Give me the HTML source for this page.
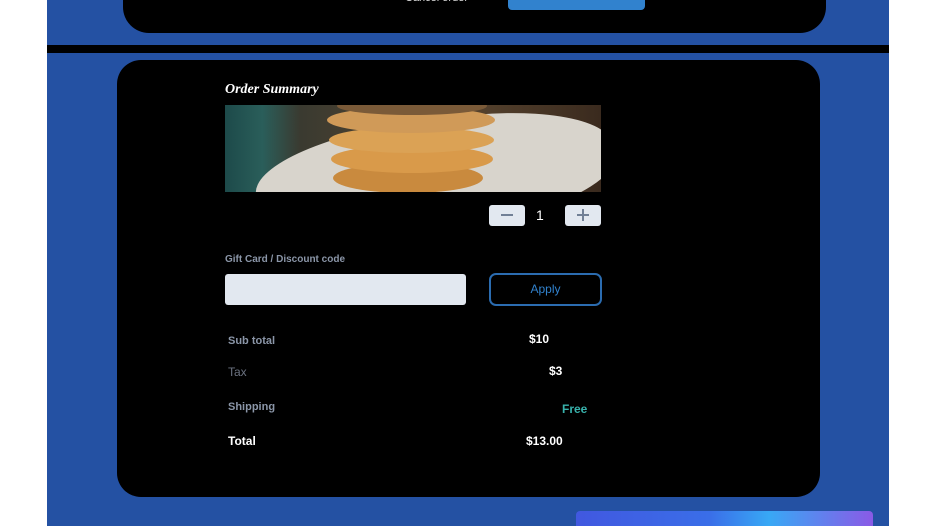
<!DOCTYPE html>
<html><head><style>
html,body{margin:0;width:936px;height:526px;overflow:hidden}
body{background:#fff;position:relative;font-family:"Liberation Sans",sans-serif}
.page{position:absolute;left:47px;top:0;width:842px;height:526px;background:#2451a3}
.bar{position:absolute;left:47px;top:45px;width:842px;height:8px;background:#000}
.c1{position:absolute;left:123px;top:-40px;width:703px;height:73px;background:#000;border-radius:0 0 26px 26px}
.c2{position:absolute;left:117px;top:60px;width:703px;height:437px;background:#000;border-radius:24px}
.abs{position:absolute}
.g{position:absolute;left:576px;top:511px;width:297px;height:15px;border-radius:4px 4px 0 0;background:linear-gradient(90deg,#4158e0 0%,#3a6ee8 45%,#38a8f5 65%,#8a5ae6 100%)}
.lbl{color:#8b96a8;font-weight:bold;font-size:11px}
</style></head><body>
<div class="page"></div>
<div class="bar"></div>
<div class="c1"></div>
<div class="abs" style="left:405px;top:-8px;color:#ddd;font-size:11px">Cancel order</div>
<div class="abs" style="left:508px;top:-10px;width:137px;height:20px;background:#3182ce;border-radius:4px"></div>
<div class="c2"></div>
<div class="abs" style="left:225px;top:82px;color:#fff;font-family:'Liberation Serif',serif;font-style:italic;font-weight:bold;font-size:14px">Order Summary</div>
<div class="abs" style="left:225px;top:105px;width:376px;height:87px;overflow:hidden;background:linear-gradient(90deg,#1d4a4a 0%,#2a5e5a 10%,#3a3a30 20%,#5a4630 60%,#3a2a1e 100%)">
 <div class="abs" style="left:30px;top:15px;width:360px;height:110px;background:#d8d4cc;border-radius:45%;transform:rotate(-8deg)"></div>
 <div class="abs" style="left:108px;top:58px;width:150px;height:30px;background:#c98a3e;border-radius:50%"></div>
 <div class="abs" style="left:106px;top:40px;width:162px;height:28px;background:#d99a4a;border-radius:50%"></div>
 <div class="abs" style="left:104px;top:22px;width:165px;height:26px;background:#dba255;border-radius:50%"></div>
 <div class="abs" style="left:102px;top:2px;width:168px;height:26px;background:#d09a58;border-radius:50%"></div>
 <div class="abs" style="left:112px;top:-8px;width:150px;height:18px;background:#7a5a38;border-radius:50%"></div>
</div>
<div class="abs" style="left:489px;top:205px;width:36px;height:21px;background:#e2e8f0;border-radius:3px"></div>
<div class="abs" style="left:501px;top:214px;width:12px;height:2px;background:#718096"></div>
<div class="abs" style="left:536px;top:207px;color:#fff;font-size:14px">1</div>
<div class="abs" style="left:565px;top:205px;width:36px;height:21px;background:#e2e8f0;border-radius:3px"></div>
<div class="abs" style="left:577px;top:214px;width:12px;height:2px;background:#718096"></div>
<div class="abs" style="left:582px;top:209px;width:2px;height:12px;background:#718096"></div>
<div class="abs lbl" style="left:225px;top:254px;font-size:10px">Gift Card / Discount code</div>
<div class="abs" style="left:225px;top:274px;width:241px;height:31px;background:#e2e8f0;border-radius:3px"></div>
<div class="abs" style="left:489px;top:273px;width:109px;height:29px;border:2px solid #2b6cb0;border-radius:7px;color:#3182ce;font-size:12px;text-align:center;line-height:29px">Apply</div>
<div class="abs lbl" style="left:228px;top:335px">Sub total</div>
<div class="abs" style="left:529px;top:332px;color:#fff;font-weight:bold;font-size:12px">$10</div>
<div class="abs" style="left:228px;top:365px;color:#6b7280;font-size:12px">Tax</div>
<div class="abs" style="left:549px;top:364px;color:#fff;font-weight:bold;font-size:12px">$3</div>
<div class="abs lbl" style="left:228px;top:401px">Shipping</div>
<div class="abs" style="left:562px;top:402px;color:#38b2ac;font-weight:bold;font-size:12px">Free</div>
<div class="abs" style="left:228px;top:434px;color:#fff;font-weight:bold;font-size:12px">Total</div>
<div class="abs" style="left:526px;top:434px;color:#fff;font-weight:bold;font-size:12px">$13.00</div>
<div class="g"></div>
</body></html>
